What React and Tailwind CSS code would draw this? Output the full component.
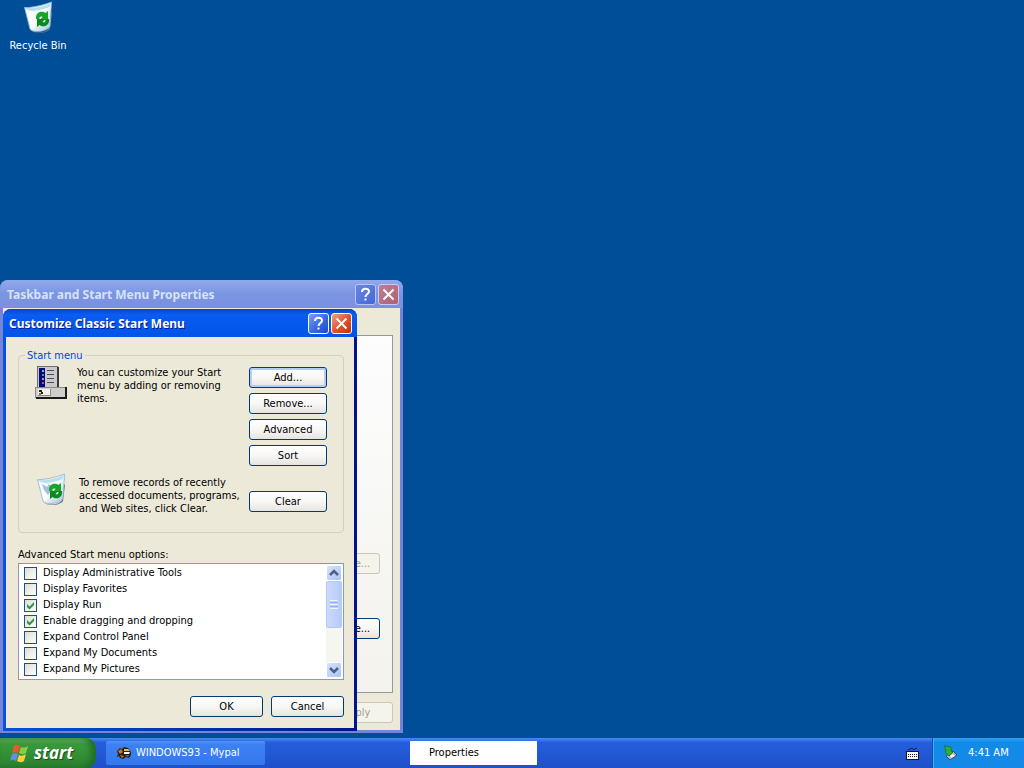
import { useState } from "react";

function RecycleBin({ full = false }) {
  return (
    <svg width="32" height="34" viewBox="0 0 32 34" aria-hidden="true" className="shrink-0">
      <defs>
        <linearGradient id="binBody" x1="0" y1="0" x2="1" y2="1">
          <stop offset="0" stopColor="#c4e4f8" />
          <stop offset="0.5" stopColor="#f8fcff" />
          <stop offset="1" stopColor="#9fc6dc" />
        </linearGradient>
      </defs>
      {full && (
        <>
          <path d="M14 7l3-6 4 5z" fill="#fde6a8" />
          <path d="M20 6l8-4 2 6-8 2z" fill="#8fc4ea" />
        </>
      )}
      <path d="M7 28c2 6 17 6 20 0l2-16 1 1-2 16c-3 5-19 6-21-1z" fill="#5d7280" />
      <path d="M2.500 7.500C9 8 22 5 29.500 2L28 26c-1 5-17 8-20 3z" fill="url(#binBody)" stroke="#8db6cf" strokeWidth="0.800" />
      <path d="M3 7.500C9 9.500 23 6.500 29 2.500l-1 4C22 10 10 12 4 10z" fill="#bcdcee" />
      <path d="M3.500 9l9 3 4 11-7 7z" fill="#fff" opacity="0.7" />
      {full && <path d="M7 12l5 3 2-3 4 4-5 7-4-5z" fill="#a8bfd9" />}
      <path d="M14 19c-1-7 6-9 9.500-6l2.500-2v9h-8l2.500-3c-2-1-3.500 0-3 2z" fill="#1aa526" />
      <path d="M27 19c1 7-6 9-9.500 6L15 27v-8h8l-2.500 3c2 1 3.500 0 3-3z" fill="#0e8a1c" />
    </svg>
  );
}

function MenuIcon() {
  return (
    <svg width="32" height="33" viewBox="0 0 32 33" aria-hidden="true" shapeRendering="crispEdges">
      <path d="M2 0h21v22H2z" fill="#6f6f6f" />
      <path d="M3 1h19v21H3z" fill="#c9c9cc" />
      <path d="M22 1h2v21h-2z" fill="#3a3a3a" />
      <path d="M4 2h6v20H4z" fill="#08087a" />
      <path d="M7 4h2v2H7zM7 12h2v2H7z" fill="#62b4ff" />
      <path d="M7 8h2v2H7z" fill="#3fa66a" />
      <path d="M7 16h2v2H7z" fill="#f04444" />
      <path d="M12 4h7v1h-7zM12 8h7v1h-7zM12 12h7v1h-7zM12 16h7v1h-7z" fill="#4c4c4c" />
      <path d="M0 21h31v11H0z" fill="#8a8a8a" />
      <path d="M1 22h29v9H1z" fill="#d0cec8" />
      <path d="M30 21h2v12h-2zM1 31h31v2H1z" fill="#1b1b1b" />
      <path d="M3 23h13v7H3z" fill="#8c8c88" />
      <path d="M3 23h12v6H3z" fill="#f3f1ea" />
      <path d="M4 24h3v2H4zM6 26h2v2H6z" fill="#222" />
      <path d="M4 27h2v2H4z" fill="#8a7a30" />
    </svg>
  );
}

function TitleButton({ label, tone }) {
  const tones = {
    help: "bg-linear-to-br from-[#7ba0f5] via-[#3a6de8] to-[#1b49c8] border-white",
    close: "bg-linear-to-br from-[#f0a088] via-[#e2542e] to-[#c02f0c] border-white",
    helpOff: "bg-linear-to-br from-[#6a86e4] to-[#4468d6] border-[#b7c6f4]",
    closeOff: "bg-linear-to-br from-[#bb7f9a] to-[#b0606c] border-[#cfc8ee]",
  };
  return (
    <button aria-label={label} className={`flex size-[21px] items-center justify-center rounded-[3px] border ${tones[tone]}`}>
      {label === "Help" ? (
        <svg width="15" height="15" viewBox="0 0 15 15" fill="none" stroke="#fff" strokeWidth="2">
          <path d="M4 5C4 0.800 11 0.800 11 4.500C11 7 7.500 7 7.500 10M7.500 11.500v2" />
        </svg>
      ) : (
        <svg width="15" height="15" viewBox="0 0 15 15" fill="none" stroke="#fff" strokeWidth="2">
          <path d="M2.500 2.500l10 10M12.500 2.500l-10 10" />
        </svg>
      )}
    </button>
  );
}

function XpButton({ children, className = "", primary = false, disabled = false }) {
  const look = disabled
    ? "border-[#c9c7ba] bg-[#f5f4ea] text-[#a1a192]"
    : "border-[#003c74] bg-linear-to-b from-white via-[#f7f7f5] to-[#e6e4de] text-black";
  return (
    <button
      disabled={disabled}
      className={`h-[21px] shrink-0 rounded-[3px] border text-center leading-[19px] ${look} ${
        primary ? "shadow-[inset_0_0_0_2px_#b5cdf3]" : ""
      } ${className}`}
    >
      {children}
    </button>
  );
}

function CheckRow({ label, initial }) {
  const [on, setOn] = useState(initial);
  return (
    <label className="flex h-4 items-center gap-1.5 pl-[5px]">
      <span className="grid size-[13px]">
        <input
          type="checkbox"
          checked={on}
          onChange={() => setOn(!on)}
          className="col-start-1 row-start-1 size-[13px] appearance-none border border-[#1c5180] bg-linear-to-br from-[#dcdcd7] to-white"
        />
        {on && (
          <svg width="13" height="13" viewBox="0 0 13 13" className="pointer-events-none col-start-1 row-start-1">
            <path d="M3 5v3l2.500 2.500L10 6V3L5.500 7.500z" fill="#2f9440" />
          </svg>
        )}
      </span>
      {label}
    </label>
  );
}

function ScrollArrow({ down = false }) {
  return (
    <button
      aria-label={down ? "Scroll down" : "Scroll up"}
      className="flex h-4 w-full items-center justify-center rounded-[2px] border border-white bg-linear-to-br from-[#d6e2fe] to-[#adc3f8]"
    >
      <svg width="10" height="8" viewBox="0 0 10 8" fill="none" stroke="#4d6185" strokeWidth="2.500">
        <path d={down ? "M1 2l4 4 4-4" : "M1 6l4-4 4 4"} />
      </svg>
    </button>
  );
}

const options = [
  ["Display Administrative Tools", false],
  ["Display Favorites", false],
  ["Display Run", true],
  ["Enable dragging and dropping", true],
  ["Expand Control Panel", false],
  ["Expand My Documents", false],
  ["Expand My Pictures", false],
];

function PropertiesWindow() {
  return (
    <section className="absolute top-[280px] left-0 flex h-[453px] w-[403px] flex-col rounded-t-lg bg-[#7684d8] px-[3px] pb-[3px]">
      <header className="-mx-[3px] flex h-7 shrink-0 items-center gap-0.5 rounded-t-lg bg-linear-to-b from-[#92a8ec] via-[#7b95e2] to-[#7c90e0] pt-px pr-1 pl-[7px]">
        <h2 className="flex-1 font-['Noto_Sans','Open_Sans',sans-serif] text-[12px] font-bold text-[#d5e2fa]">
          Taskbar and Start Menu Properties
        </h2>
        <TitleButton label="Help" tone="helpOff" />
        <TitleButton label="Close" tone="closeOff" />
      </header>
      <div className="flex flex-1 flex-col gap-[9px] bg-[#ece9d8] px-[7px] pt-[27px] pb-[7px]">
        <div className="flex flex-1 flex-col items-end justify-end gap-11 border border-[#919b9c] bg-linear-to-b from-[#fdfdfe] to-[#f3f2ec] pr-3 pb-[53px]">
          <XpButton disabled className="w-[81px]">Customize...</XpButton>
          <XpButton className="w-[81px]">Customize...</XpButton>
        </div>
        <div className="flex justify-end">
          <XpButton disabled className="w-[73px]">Apply</XpButton>
        </div>
      </div>
    </section>
  );
}

function CustomizeDialog() {
  return (
    <section className="absolute top-[309px] left-[3px] flex w-[354px] flex-col rounded-t-lg bg-linear-to-r from-[#0b4fe0] to-[#00138c] px-[3px] pb-[3px]">
      <header className="-mx-[3px] flex h-7 shrink-0 items-center gap-0.5 rounded-t-lg bg-linear-to-b from-[#0a46bf] from-0% via-[#0a5cf2] via-20% to-[#0054e6] pt-px pr-[5px] pl-1.5">
        <h2 className="flex-1 font-['Noto_Sans','Open_Sans',sans-serif] text-[12px] font-bold text-white [text-shadow:1px_1px_#0a1883]">
          Customize Classic Start Menu
        </h2>
        <TitleButton label="Help" tone="help" />
        <TitleButton label="Close" tone="close" />
      </header>
      <div className="flex flex-col bg-[#ece9d8] pt-3 pr-2.5 pb-[11px] pl-3">
        <fieldset className="h-[184px] rounded-[4px] border border-[#d0d0bf] pr-4">
          <legend className="ml-1.5 h-[13px] px-0.5 leading-[13px] text-[#0046d5]">Start menu</legend>
          <div className="flex h-[110px] items-start justify-between pl-4">
            <div className="flex gap-2.5 pt-1">
              <MenuIcon />
              <p className="leading-[13px]">
                You can customize your Start
                <br />
                menu by adding or removing
                <br />
                items.
              </p>
            </div>
            <div className="flex flex-col gap-[5px] pt-[5px]">
              <XpButton primary className="w-[78px]">Add...</XpButton>
              <XpButton className="w-[78px]">Remove...</XpButton>
              <XpButton className="w-[78px]">Advanced</XpButton>
              <XpButton className="w-[78px]">Sort</XpButton>
            </div>
          </div>
          <div className="flex items-start justify-between pl-4">
            <div className="flex gap-3">
              <RecycleBin full />
              <p className="pt-1 leading-[13px]">
                To remove records of recently
                <br />
                accessed documents, programs,
                <br />
                and Web sites, click Clear.
              </p>
            </div>
            <XpButton className="mt-[19px] w-[78px]">Clear</XpButton>
          </div>
        </fieldset>
        <p id="options-label" className="mt-[15px] mb-0.5 leading-[13px]">Advanced Start menu options:</p>
        <div role="group" aria-labelledby="options-label" className="flex h-[117px] border border-[#7f9db9] bg-white py-px pr-px">
          <div className="flex-1 overflow-hidden">
            {options.map(([label, on]) => (
              <CheckRow key={label} label={label} initial={on} />
            ))}
          </div>
          <div className="flex w-4 flex-col bg-[#f6f6f1]">
            <ScrollArrow />
            <div className="flex h-[47px] flex-col items-center justify-center gap-px rounded-[2px] border border-[#b4c8f6] bg-linear-to-r from-[#cbd9fd] to-[#b7cafa]">
              <span className="h-px w-2 bg-[#eef4fe]" />
              <span className="h-px w-2 bg-[#8cb0f8]" />
              <span className="h-px w-2 bg-[#eef4fe]" />
              <span className="h-px w-2 bg-[#8cb0f8]" />
              <span className="h-px w-2 bg-[#eef4fe]" />
            </div>
            <div className="flex-1" />
            <ScrollArrow down />
          </div>
        </div>
        <div className="mt-4 flex justify-end gap-2">
          <XpButton className="w-[73px]">OK</XpButton>
          <XpButton className="w-[73px]">Cancel</XpButton>
        </div>
      </div>
    </section>
  );
}

function Taskbar() {
  return (
    <footer className="flex h-[30px] shrink-0 items-stretch bg-linear-to-b from-[#4a8af0] from-0% via-[#245edc] via-15% to-[#1f50c8]">
      <button className="flex w-24 items-center gap-1 rounded-r-[10px] bg-linear-to-b from-[#6cb36c] from-0% via-[#399a3b] via-20% to-[#2c8030] pl-2.5 text-white shadow-[inset_-5px_0_6px_#1f6d26]">
        <svg width="20" height="19" viewBox="0 0 20 19" aria-hidden="true">
          <path d="M4 2c3-2 4-1 6 0L8 9C6 8 5 8 2 9z" fill="#f0562b" />
          <path d="M11 3c2 1 4 1 7-1l-2 7c-3 2-5 1-7 0z" fill="#86cf45" />
          <path d="M2 10c3-1 4-1 6 0l-2 7c-2-1-3-2-6 0z" fill="#5a93ef" />
          <path d="M9 11c2 1 4 1 7-1l-2 7c-3 2-5 1-7 0z" fill="#fbd13c" />
        </svg>
        <span className="font-['Open_Sans','Noto_Sans',sans-serif] text-[17px] leading-5 font-bold italic [text-shadow:1px_1px_1px_#174b17]">start</span>
      </button>
      <button className="mt-[3px] mb-[3px] ml-2.5 flex w-[159px] items-center gap-1 rounded-[2px] bg-linear-to-b from-[#5591f5] from-0% via-[#3c81f3] via-15% to-[#3478ec] pl-2.5 text-white">
        <svg width="16" height="16" viewBox="0 0 16 16" aria-hidden="true">
          <path d="M1 6l3-3 2 1 2-2 4 1 3 4v3l-2 3-3-1-3 2-3-1-1-2-2 1 1-3z" fill="#28201c" />
          <path d="M2 6l3-2 2 3-3 2zM4 10l4 1-2 2z" fill="#c8762c" />
          <path d="M8 7h6l-1 2H8z" fill="#fff" />
          <path d="M8 4l4 0 2 2H8z" fill="#e6b54d" />
          <path d="M9 10l4 0-1 2z" fill="#a0532c" />
        </svg>
        WINDOWS93 - Mypal
      </button>
      <button className="mt-[3px] mb-[3px] ml-[145px] w-[127px] bg-white pl-[19px] text-left text-black">Properties</button>
      <div className="flex-1" />
      <button aria-label="Keyboard" className="mr-3 flex items-center">
        <svg width="15" height="14" viewBox="0 0 15 14" aria-hidden="true" shapeRendering="crispEdges">
          <path d="M3 3h2v1H3zM5 2h3v1H5zM8 3h2v1H8zM10 2h2v1h-2z" fill="#182447" />
          <path d="M1 5h13v9H1z" fill="#161616" />
          <path d="M2 6h11v7H2z" fill="#f8f8f8" />
          <path d="M3 8h1v1H3zM5 8h1v1H5zM7 8h1v1H7zM9 8h1v1H9zM11 8h1v1h-1zM3 10h1v1H3zM5 10h1v1H5zM7 10h1v1H7zM9 10h1v1H9zM11 10h1v1h-1z" fill="#1c1c1c" />
        </svg>
      </button>
      <div className="flex w-[92px] items-center gap-2.5 border-l border-[#0d4fb8] bg-linear-to-b from-[#2ba2f2] from-0% via-[#118be8] via-15% to-[#1589e8] pl-2.5 text-white shadow-[inset_1px_0_#37b5f6]">
        <svg width="15" height="16" viewBox="0 0 15 16" aria-hidden="true">
          <path d="M3 11l7-5 4 4-7 5z" fill="#a9b5bb" stroke="#40505a" />
          <path d="M7 11l3-2 2 2-4 2z" fill="#eef3f5" />
          <path d="M1 1l7 1v4l2 1-4 4-4-4 1-2z" fill="#2eb12e" stroke="#126d2a" strokeWidth="0.700" />
        </svg>
        <time>4:41 AM</time>
      </div>
    </footer>
  );
}

export default function App() {
  return (
    <div className="flex min-h-screen flex-col overflow-hidden bg-[#004e98] font-['DejaVu_Sans_Condensed','DejaVu_Sans',sans-serif] text-[11px] text-black">
      <main className="relative flex-1">
        <a href="#recycle-bin" className="flex w-[76px] flex-col items-center gap-[5px] text-white">
          <RecycleBin />
          <span className="leading-[13px]">Recycle Bin</span>
        </a>
        <PropertiesWindow />
        <CustomizeDialog />
      </main>
      <Taskbar />
    </div>
  );
}
